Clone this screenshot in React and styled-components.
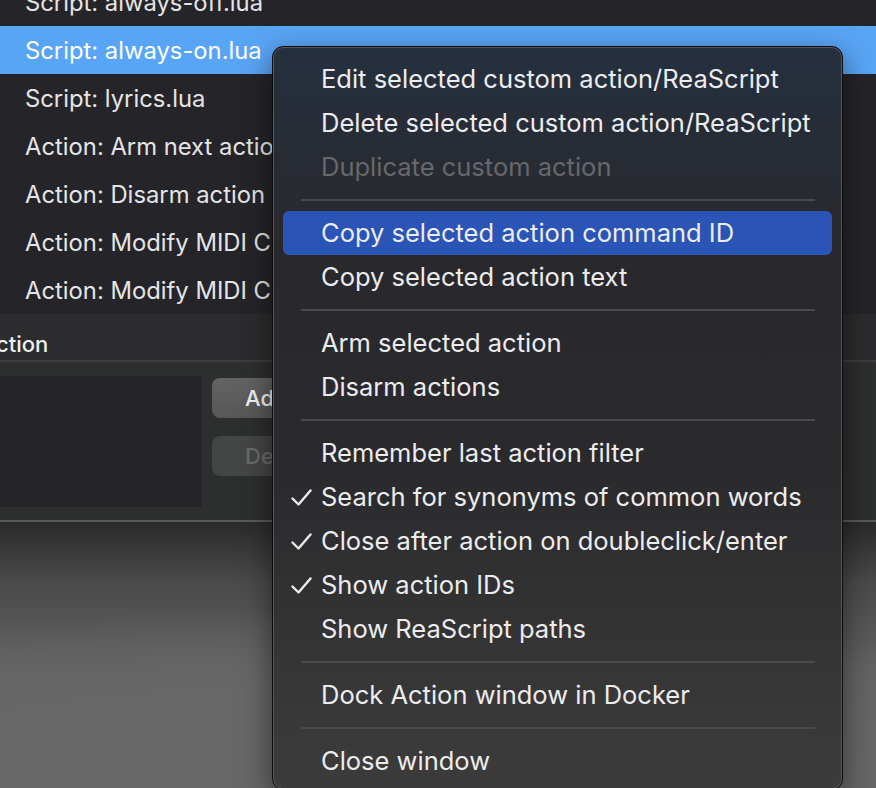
import React from "react";
import styled, { createGlobalStyle } from "styled-components";

const Global = createGlobalStyle`
  html, body { margin: 0; padding: 0; }
  body {
    width: 876px; height: 788px; overflow: hidden;
    background: #252428;
    font-family: Inter, "Noto Sans", "Liberation Sans", sans-serif;
    -webkit-font-smoothing: antialiased;
  }
`;

const Page = styled.div`
  position: relative;
  width: 876px;
  height: 788px;
  overflow: hidden;
  display: flex;
  flex-direction: column;
`;

const Window = styled.div`
  display: flex;
  flex-direction: column;
  background: #2c2c2e;
  border-bottom: 2px solid #5a5a5c;
`;

const List = styled.div`
  margin-top: -22px;
  display: flex;
  flex-direction: column;
  background: #252428;
`;

const Row = styled.div`
  height: 48px;
  display: flex;
  align-items: center;
  padding-left: 25px;
  font-size: 23.8px;
  color: #e4e4e6;
  background: ${(p) => (p.$selected ? "#59a5f5" : "transparent")};
  ${(p) => p.$selected && "color: #fff;"}
  white-space: nowrap;
`;

const SectionHead = styled.div`
  height: 48px;
  display: flex;
  align-items: flex-end;
  padding-bottom: 3px;
  box-sizing: border-box;
  margin-left: -4px;
  font-size: 22px;
  font-weight: 500;
  color: #f0f0f0;
  border-bottom: 2px solid #3d3d3f;
`;

const SectionBody = styled.div`
  height: 158px;
  box-sizing: border-box;
  padding-top: 14px;
  display: flex;
  gap: 10px;
  background: #2d2e2e;
`;

const TextBox = styled.div`
  width: 202px;
  height: 131px;
  background: #252428;
`;

const Buttons = styled.div`
  display: flex;
  flex-direction: column;
  gap: 18px;
  padding-top: 2px;
`;

const Btn = styled.div`
  width: 140px;
  height: 40px;
  border-radius: 8px;
  box-sizing: border-box;
  padding-left: 33px;
  display: flex;
  align-items: center;
  font-size: 22px;
  font-weight: 500;
  background: ${(p) => (p.$disabled ? "#444545" : "linear-gradient(#636363, #575757)")};
  color: ${(p) => (p.$disabled ? "#6a6a6a" : "#f2f2f2")};
`;

const Desktop = styled.div`
  flex: 1;
  background:
    radial-gradient(ellipse 140% 90% at 40% 100%, #676767 40%, rgba(103,103,103,0) 75%),
    linear-gradient(#2a2a2a 0px, #4a4a4a 60px, #626262 150px, #666 260px);
`;

const Menu = styled.div`
  position: absolute;
  left: 272px;
  top: 46px;
  width: 571px;
  height: 744px;
  box-sizing: border-box;
  padding: 10px 10px 0;
  border-radius: 11px;
  border: 1px solid #0c0c0e;
  box-shadow: inset 0 0 0 1px #56575a, 0 10px 30px rgba(0,0,0,0.5);
  background: linear-gradient(
    #25303f 0px,
    #272c35 100px,
    #29292d 200px,
    #2a2a2d 420px,
    #323233 560px,
    #3a3a3a 700px,
    #3b3b3b 744px
  );
  display: flex;
  flex-direction: column;
`;

const Item = styled.div`
  position: relative;
  height: 44px;
  flex-shrink: 0;
  box-sizing: border-box;
  padding-bottom: 2px;
  display: flex;
  align-items: center;
  padding-left: 38px;
  border-radius: 6px;
  font-size: 25.5px;
  white-space: nowrap;
  color: ${(p) => (p.$disabled ? "#67686b" : "#ececee")};
  background: ${(p) => (p.$active ? "#2a54b5" : "transparent")};
`;

const Check = styled.svg`
  position: absolute;
  left: 8px;
  top: 14px;
  width: 21px;
  height: 17px;
`;

const Sep = styled.div`
  height: 22px;
  flex-shrink: 0;
  display: flex;
  align-items: center;
  padding: 0 17px 0 18px;
  &::after {
    content: "";
    flex: 1;
    height: 2px;
    background: #4a4a4d;
  }
`;

const CheckMark = () => (
  <Check viewBox="0 0 21 17">
    <path d="M1.5 9.5 L7.5 15.5 L19.5 1.5" fill="none" stroke="#ececee" strokeWidth="2.4" strokeLinecap="round" strokeLinejoin="round" />
  </Check>
);

const rows = [
  "Script: always-off.lua",
  "Script: always-on.lua",
  "Script: lyrics.lua",
  "Action: Arm next action",
  "Action: Disarm action",
  "Action: Modify MIDI CC/mousewheel: Negative",
  "Action: Modify MIDI CC/mousewheel: Positive",
];

const menu = [
  { t: "Edit selected custom action/ReaScript" },
  { t: "Delete selected custom action/ReaScript" },
  { t: "Duplicate custom action", disabled: true },
  "sep",
  { t: "Copy selected action command ID", active: true },
  { t: "Copy selected action text" },
  "sep",
  { t: "Arm selected action" },
  { t: "Disarm actions" },
  "sep",
  { t: "Remember last action filter" },
  { t: "Search for synonyms of common words", checked: true },
  { t: "Close after action on doubleclick/enter", checked: true },
  { t: "Show action IDs", checked: true },
  { t: "Show ReaScript paths" },
  "sep",
  { t: "Dock Action window in Docker" },
  "sep",
  { t: "Close window" },
];

export default function App() {
  return (
    <>
      <Global />
      <Page>
        <Window>
          <List>
            {rows.map((r, i) => (
              <Row key={i} $selected={i === 1}>{r}</Row>
            ))}
          </List>
          <SectionHead>ction</SectionHead>
          <SectionBody>
            <TextBox />
            <Buttons>
              <Btn>Add</Btn>
              <Btn $disabled>Delete</Btn>
            </Buttons>
          </SectionBody>
        </Window>
        <Desktop />
        <Menu>
          {menu.map((m, i) =>
            m === "sep" ? (
              <Sep key={i} />
            ) : (
              <Item key={i} $disabled={m.disabled} $active={m.active}>
                {m.checked && <CheckMark />}
                {m.t}
              </Item>
            )
          )}
        </Menu>
      </Page>
    </>
  );
}
